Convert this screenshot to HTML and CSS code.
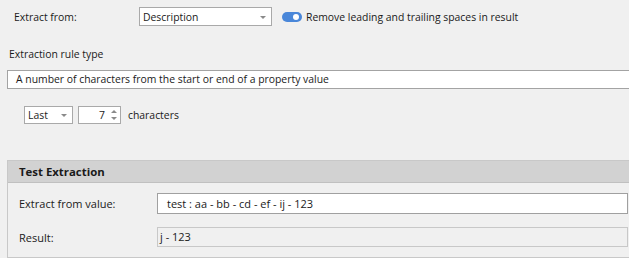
FILE: index.html
```html
<!DOCTYPE html>
<html lang="en">
<head>
  <meta charset="UTF-8">
  <title>Extraction rule</title>
  <link rel="stylesheet" href="styles.css">
</head>
<body>
  <div class="page">
    <div class="row top-row">
      <span class="top-label">Extract from:</span>
      <div class="combo combo-source">
        <span>Description</span>
        <span class="arrow"></span>
      </div>
      <span class="toggle"><span class="knob"></span></span>
      <span class="toggle-label">Remove leading and trailing spaces in result</span>
    </div>

    <div class="rule-title">Extraction rule type</div>
    <div class="rule-box">A number of characters from the start or end of a property value</div>

    <div class="row count-row">
      <div class="combo combo-side">
        <span>Last</span>
        <span class="arrow"></span>
      </div>
      <div class="spin">
        <span class="spin-value">7</span>
        <span class="spin-buttons">
          <span class="up"></span>
          <span class="down"></span>
        </span>
      </div>
      <span class="count-label">characters</span>
    </div>

    <div class="group">
      <div class="group-head">Test Extraction</div>
      <div class="group-body">
        <div class="field">
          <span class="field-label">Extract from value:</span>
          <div class="edit">test : aa - bb - cd - ef - ij - 123</div>
        </div>
        <div class="field">
          <span class="field-label">Result:</span>
          <div class="edit readonly">j - 123</div>
        </div>
      </div>
    </div>
  </div>
</body>
</html>
```

FILE: styles.css
```css
body { margin: 0; background: #f0f0f0; font-family: "Open Sans", "Noto Sans", sans-serif; font-size: 10.4px; color: #1a1a1a; }
.page { width: 629px; height: 258px; overflow: hidden; }
.row { display: flex; align-items: center; }

.top-row { height: 19px; margin-top: 7px; }
.top-label { width: 125px; padding-left: 14px; }
.combo { display: flex; align-items: center; justify-content: space-between; box-sizing: border-box; background: #fff; border: 1px solid #a9a9a9; padding: 0 5px 0 3px; }
.combo-source { width: 133px; height: 19px; }
.arrow { width: 0; height: 0; border-left: 3px solid transparent; border-right: 3px solid transparent; border-top: 3px solid #8a8a8a; margin-top: 1px; }
.toggle { position: relative; width: 20px; height: 10px; border-radius: 5px; background: #4a87d9; margin-left: 10px; margin-right: 4px; }
.knob { position: absolute; right: 3px; top: 2px; width: 6px; height: 6px; border-radius: 50%; background: #fff; }

.rule-title { margin: 20px 0 0 9px; height: 16px; line-height: 16px; }
.rule-box { box-sizing: border-box; width: 640px; height: 19px; line-height: 17px; margin: 8px 0 0 7px; padding-left: 8px; background: #fff; border: 1px solid #a3a3a3; }

.count-row { margin: 17px 0 0 24px; height: 18px; }
.combo-side { width: 49px; height: 18px; }
.spin { display: flex; align-items: center; box-sizing: border-box; width: 43px; height: 18px; margin-left: 5px; background: #fff; border: 1px solid #a9a9a9; }
.spin-value { flex: 1; text-align: right; padding-right: 3px; }
.spin-buttons { display: flex; flex-direction: column; justify-content: center; gap: 4px; width: 12px; align-items: center; }
.up { width: 0; height: 0; border-left: 3px solid transparent; border-right: 3px solid transparent; border-bottom: 3px solid #8a8a8a; }
.down { width: 0; height: 0; border-left: 3px solid transparent; border-right: 3px solid transparent; border-top: 3px solid #8a8a8a; }
.count-label { margin-left: 7px; }

.group { width: 640px; margin: 36px 0 0 7px; border: 1px solid #c8c8c8; border-right: none; font-size: 11px; }
.group-head { height: 21px; line-height: 21px; padding-left: 11px; background: #d2d2d2; border-bottom: 1px solid #c0c0c0; font-weight: bold; font-size: 11.4px; }
.group-body { padding: 10px 0 10px 11px; }
.field { display: flex; align-items: center; }
.field + .field { margin-top: 13px; }
.field-label { width: 138px; }
.edit { box-sizing: border-box; width: 471px; height: 21px; line-height: 19px; padding-left: 9px; background: #fff; border: 1px solid #a0a0a0; }
.edit.readonly { height: 20px; line-height: 18px; padding-left: 2px; background: #f0f0f0; border-color: #c8c8c8; }
```
